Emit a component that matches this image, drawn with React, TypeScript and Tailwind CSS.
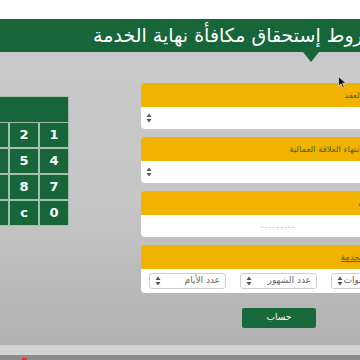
import React from "react";

const font = { fontFamily: '"DejaVu Sans", "Noto Sans", sans-serif' };

function Spinner() {
  return (
    <svg width="6" height="10" viewBox="0 0 6 10" className="shrink-0">
      <path d="M3 0.5 L5.5 4 L0.5 4 Z" fill="#555" />
      <path d="M3 9.5 L5.5 6 L0.5 6 Z" fill="#555" />
    </svg>
  );
}

function Label({ text, underline }: { text: string; underline?: boolean }) {
  return (
    <div className="h-[24px] bg-[#f2b200] rounded-tl-[4px] flex items-center justify-start pr-[4px]" dir="rtl">
      <span className={"text-[8.5px] text-[#55601c] whitespace-nowrap " + (underline ? "underline" : "")} style={font}>
        {text}
      </span>
    </div>
  );
}

function Field({ label, children }: { label: string; children: React.ReactNode }) {
  return (
    <div className="flex flex-col w-[244px]">
      <Label text={label} />
      <div className="h-[22px] bg-white rounded-bl-[4px] flex items-center">{children}</div>
    </div>
  );
}

function Select({ text, pr }: { text: string; pr?: string }) {
  return (
    <div className={"h-[16px] w-[77px] border border-[#cfcfcf] rounded-[3px] bg-white flex items-center justify-between pl-[5px] shrink-0 " + (pr ?? "pr-[5px]")}>
      <Spinner />
      <span className="text-[9px] text-[#666] whitespace-nowrap" style={font}>{text}</span>
    </div>
  );
}

export default function App() {
  const cells = ["1", "2", "3", "4", "5", "6", "7", "8", "9", "0", "c", "="];
  return (
    <div className="w-[360px] h-[360px] overflow-hidden flex flex-col bg-white relative" style={font}>
      <div className="h-[19px] bg-white shrink-0" />
      <div className="h-[33px] bg-[#17663a] shrink-0 flex justify-start overflow-hidden">
        <div className="w-[380px] shrink-0 flex items-center justify-start" dir="rtl">
          <span className="text-[19px] text-white leading-none whitespace-nowrap" style={font}>شروط إستحقاق مكافأة نهاية الخدمة</span>
        </div>
      </div>
      <div className="flex-1 relative bg-gradient-to-b from-[#c9c9c9] via-[#c6c6c6] to-[#b1b1b1] flex items-start">
        <div className="absolute left-[303px] top-0 w-0 h-0 border-l-[8px] border-r-[8px] border-t-[10px] border-l-transparent border-r-transparent border-t-[#17663a]" />
        {/* calculator */}
        <div className="ml-[-21px] mt-[44px] w-[90px] shrink-0 bg-[#a4bfab] p-[1px] flex flex-col gap-[1px]">
          <div className="h-[25px] bg-[#17663a]" />
          <div className="grid grid-cols-3 gap-[2px]" dir="rtl">
            {cells.map((c) => (
              <div key={c} className="h-[24px] bg-[#17663a] flex items-center justify-center text-white text-[13px] font-bold">
                {c}
              </div>
            ))}
          </div>
        </div>
        {/* form */}
        <div className="ml-[72px] mt-[31px] flex flex-col shrink-0">
          <div className="flex flex-col gap-[8px]">
            <Field label="بداية العقد">
              <div className="pl-[5px]"><Spinner /></div>
            </Field>
            <Field label="تاريخ انتهاء العلاقة العمالية">
              <div className="pl-[5px]"><Spinner /></div>
            </Field>
            <Field label="الراتب">
              <div className="w-full flex justify-center pl-[30px]">
                <span className="text-[9px] text-[#999] tracking-[1px]">.........</span>
              </div>
            </Field>
            <div className="flex flex-col w-[244px]">
              <Label text="مدة الخدمة" underline />
              <div className="h-[24px] bg-white rounded-bl-[4px] flex items-center gap-[14px] pl-[8px]">
                <Select text="عدد الأيام" />
                <Select text="عدد الشهور" />
                <Select text="عدد السنوات" pr="pr-[15px]" />
              </div>
            </div>
          </div>
          <div className="mt-[15px] ml-[101px] w-[74px] h-[20px] bg-[#17693b] rounded-[2px] flex items-center justify-center">
            <span className="text-[9px] text-white">حساب</span>
          </div>
        </div>
        {/* cursor */}
        <svg className="absolute left-[338px] top-[24px]" width="9" height="13" viewBox="0 0 9 13">
          <path d="M0.5 0.5 L0.5 10 L3 7.8 L4.8 12 L6.3 11.3 L4.6 7.3 L8 7.3 Z" fill="#111" stroke="#fff" strokeWidth="0.6" />
        </svg>
      </div>
      <div className="h-[10px] bg-[#d3d3d3] shrink-0" />
      <div className="h-[5px] bg-[#8b8b8b] shrink-0 relative">
        <div className="absolute left-[22px] top-[3px] w-[5px] h-[2px] bg-[#d33]" />
      </div>
    </div>
  );
}
